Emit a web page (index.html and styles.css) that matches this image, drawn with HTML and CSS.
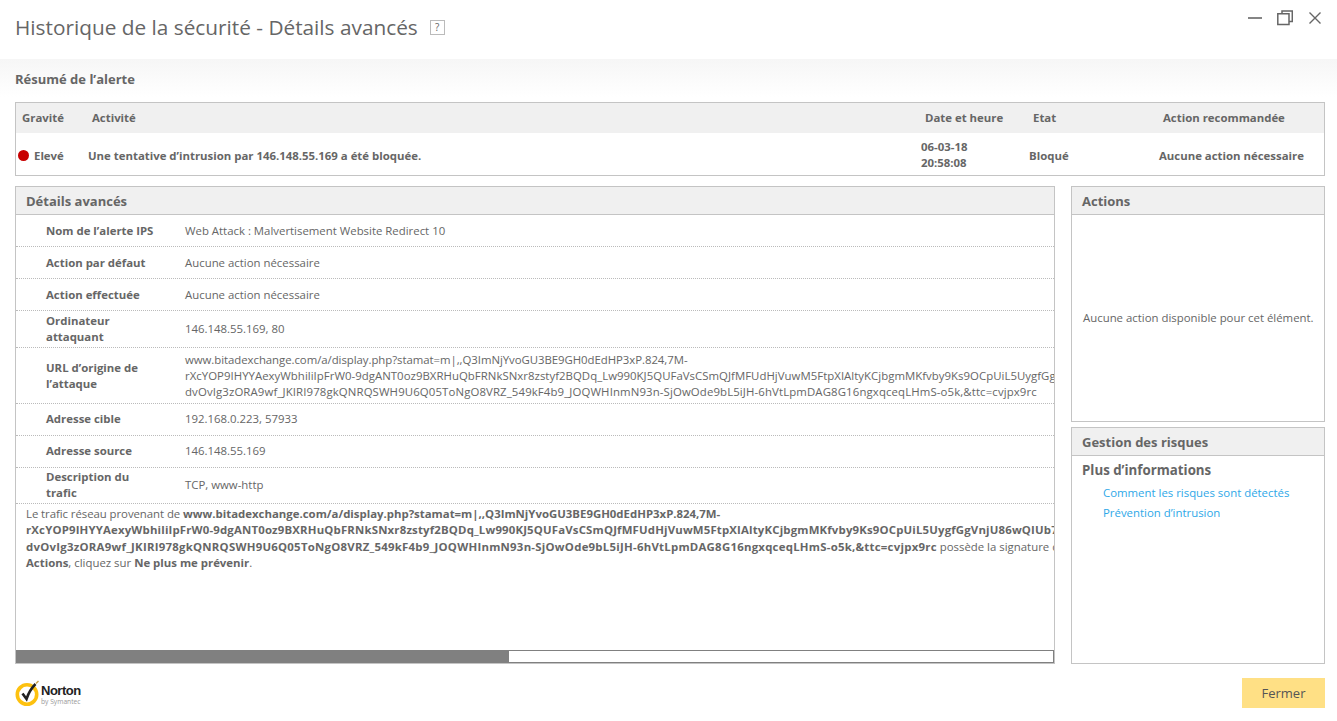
FILE: index.html
```html
<!DOCTYPE html>
<html lang="fr">
<head>
  <meta charset="UTF-8">
  <title>Historique de la sécurité - Détails avancés</title>
  <link rel="stylesheet" href="styles.css">
</head>
<body>
  <header class="title-bar">
    <h1>Historique de la sécurité - Détails avancés</h1>
    <span class="help-btn">?</span>
    <div class="window-btns">
      <svg width="16" height="16" viewBox="0 0 16 16"><path d="M2 8h14" stroke="#666" stroke-width="1.6" fill="none"/></svg>
      <svg width="16" height="16" viewBox="0 0 16 16"><path d="M.8 3.800H12V14.500H.8zM5 3.500V1H15.300V11.500H12" stroke="#666" stroke-width="1.500" fill="none"/></svg>
      <svg width="14" height="16" viewBox="0 0 14 16"><path d="M1.500 2.500l11 11M12.500 2.500l-11 11" stroke="#666" stroke-width="1.400" fill="none"/></svg>
    </div>
  </header>

  <main>
    <section class="summary">
      <h2>Résumé de l’alerte</h2>
      <div class="alert-table">
        <div class="alert-row alert-head">
          <span class="pl-6">Gravité</span>
          <span class="pl-4">Activité</span>
          <span class="pl-4">Date et heure</span>
          <span class="pl-4">Etat</span>
          <span class="pl-4">Action recommandée</span>
        </div>
        <div class="alert-row alert-body">
          <span class="severity"><i class="dot"></i>Elevé</span>
          <span>Une tentative d’intrusion par 146.148.55.169 a été bloquée.</span>
          <span class="date">06-03-18<br>20:58:08</span>
          <span>Bloqué</span>
          <span>Aucune action nécessaire</span>
        </div>
      </div>
    </section>

    <div class="columns">
      <section class="panel details">
        <h3 class="panel-head">Détails avancés</h3>
        <div class="detail-rows">
          <div class="detail-row"><b>Nom de l’alerte IPS</b><span>Web Attack : Malvertisement Website Redirect 10</span></div>
          <div class="detail-row"><b>Action par défaut</b><span>Aucune action nécessaire</span></div>
          <div class="detail-row"><b>Action effectuée</b><span>Aucune action nécessaire</span></div>
          <div class="detail-row tall"><b>Ordinateur attaquant</b><span>146.148.55.169, 80</span></div>
          <div class="detail-row url"><b>URL d’origine de l’attaque</b><span><span class="url-line1">www.bitadexchange.com/a/display.php?stamat=m|,,Q3ImNjYvoGU3BE9GH0dEdHP3xP.824,7M-</span><br><span class="url-line2">rXcYOP9IHYYAexyWbhiliIpFrW0-9dgANT0oz9BXRHuQbFRNkSNxr8zstyf2BQDq_Lw990KJ5QUFaVsCSmQJfMFUdHjVuwM5FtpXIAltyKCjbgmMKfvby9Ks9OCpUiL5UygfGgVnjU86wQIUb7Zk</span><br><span class="url-line3">dvOvIg3zORA9wf_JKIRI978gkQNRQSWH9U6Q05ToNgO8VRZ_549kF4b9_JOQWHInmN93n-SjOwOde9bL5iJH-6hVtLpmDAG8G16ngxqceqLHmS-o5k,&amp;ttc=cvjpx9rc</span></span></div>
          <div class="detail-row"><b>Adresse cible</b><span>192.168.0.223, 57933</span></div>
          <div class="detail-row"><b>Adresse source</b><span>146.148.55.169</span></div>
          <div class="detail-row tall"><b>Description du trafic</b><span>TCP, www-http</span></div>
        </div>
        <p class="detail-text"><span class="lead">Le trafic réseau provenant de</span> <b>www.bitadexchange.com/a/display.php?stamat=m|,,Q3ImNjYvoGU3BE9GH0dEdHP3xP.824,7M-<br><span class="bold-line2">rXcYOP9IHYYAexyWbhiliIpFrW0-9dgANT0oz9BXRHuQbFRNkSNxr8zstyf2BQDq_Lw990KJ5QUFaVsCSmQJfMFUdHjVuwM5FtpXIAltyKCjbgmMKfvby9Ks9OCpUiL5UygfGgVnjU86wQIUb7Zk</span><br><span class="bold-line3">dvOvIg3zORA9wf_JKIRI978gkQNRQSWH9U6Q05ToNgO8VRZ_549kF4b9_JOQWHInmN93n-SjOwOde9bL5iJH-6hVtLpmDAG8G16ngxqceqLHmS-o5k,&amp;ttc=cvjpx9rc</span></b> possède la signature d’attaque<br><b>Actions</b>, cliquez sur <b>Ne plus me prévenir</b>.</p>
        <div class="scrollbar"><div class="scroll-thumb"></div></div>
      </section>

      <aside class="side">
        <section class="panel actions">
          <h3 class="panel-head">Actions</h3>
          <p class="empty">Aucune action disponible pour cet élément.</p>
        </section>
        <section class="panel risks">
          <h3 class="panel-head">Gestion des risques</h3>
          <h4>Plus d’informations</h4>
          <a href="#">Comment les risques sont détectés</a>
          <a href="#">Prévention d’intrusion</a>
        </section>
      </aside>
    </div>
  </main>

  <footer>
    <div class="logo">
      <svg width="26" height="26" viewBox="0 0 26 26">
        <circle cx="12" cy="14.500" r="9.700" fill="#fff" stroke="#fdc10f" stroke-width="3.600"/>
        <path d="M7.500 13.500l4 5.500c2-6 5-11 9-15" stroke="#222" stroke-width="2.600" fill="none"/>
        <path d="M21 3.500l2.500-2.500" stroke="#c9a24a" stroke-width="1.500"/>
      </svg>
      <div class="logo-text"><strong>Norton</strong><small>by Symantec</small></div>
    </div>
    <button class="close-btn">Fermer</button>
  </footer>
</body>
</html>
```

FILE: styles.css
```css
* {
  box-sizing: border-box;
}

html, body {
  height: 100%;
}

body {
  margin: 0;
  background: #fff;
  color: #666;
  font-family: "Open Sans", "Noto Sans", sans-serif;
  font-size: 11.4px;
  line-height: 16px;
  overflow: hidden;
}

.title-bar {
  display: flex;
  align-items: center;
  height: 59px;
  padding: 0 15px 5px;
}

h1 {
  margin: 0;
  font-size: 20.800px;
  font-weight: 400;
  color: #666;
}

.help-btn {
  width: 15px;
  height: 15px;
  margin-left: 12px;
  border: 1px solid #bbb;
  font-size: 10px;
  line-height: 13px;
  text-align: center;
}

.window-btns {
  display: flex;
  align-self: flex-start;
  gap: 15px;
  margin-left: auto;
  padding-top: 10px;
}

main {
  padding: 0 12px 0 15px;
}

.summary {
  margin: 0 -12px 0 -15px;
  padding: 0 12px 0 15px;
  background: linear-gradient(#f6f6f6, #fff 38px);
}

h2 {
  margin: 0;
  padding-top: 12px;
  height: 43px;
  font-size: 13px;
  font-weight: 700;
}

.alert-table {
  border: 1px solid #c4c4c4;
  font-weight: 700;
}

.alert-row {
  display: grid;
  grid-template-columns: 72px 833px 108px 130px 1fr;
  align-items: center;
}

.alert-head {
  height: 30px;
  background: #f0f0f0;
}

.alert-body {
  height: 42px;
  padding-top: 4px;
}

.pl-6 {
  padding-left: 6px;
}

.pl-4 {
  padding-left: 4px;
}

.severity {
  display: flex;
  align-items: center;
}

.dot {
  width: 11px;
  height: 11px;
  margin: -2px 5px 0 2px;
  border-radius: 50%;
  background: #c80000;
}

.date {
  margin-top: -2px;
}

.columns {
  display: grid;
  grid-template-columns: 1040px 254px;
  gap: 16px;
  margin-top: 10px;
  height: 478px;
}

.panel {
  border: 1px solid #c4c4c4;
}

.panel-head {
  margin: 0;
  height: 28px;
  padding-left: 10px;
  background: #f0f0f0;
  border-bottom: 1px solid #c4c4c4;
  font-size: 13px;
  font-weight: 700;
  line-height: 29px;
}

.details {
  position: relative;
  overflow: hidden;
  white-space: nowrap;
}

.detail-row {
  display: grid;
  grid-template-columns: 139px 1fr;
  align-items: center;
  height: 32px;
  padding-left: 30px;
  border-bottom: 1px dotted #bbb;
}

.detail-row b {
  font-weight: 700;
  white-space: normal;
  width: 110px;
}

.detail-row.tall {
  height: 36.500px;
}

.detail-row.url {
  height: 56px;
  padding-top: 1px;
}

.url-line1 {
  letter-spacing: -0.05px;
}

.url-line2 {
  letter-spacing: 0.03px;
}

.url-line3 {
  letter-spacing: 0.12px;
}

.bold-line2 {
  letter-spacing: 0.17px;
}

.bold-line3 {
  letter-spacing: 0.25px;
}

.lead {
  letter-spacing: -0.06px;
}

.detail-text {
  margin: 0;
  padding: 2px 0 0 10px;
  line-height: 16.300px;
}

.detail-text b {
  font-weight: 700;
}

.scrollbar {
  position: absolute;
  left: 0;
  right: 0;
  bottom: 0;
  height: 13px;
  background: #fff;
  border: 1px solid #808080;
}

.scroll-thumb {
  width: 491px;
  height: 100%;
  margin: -1px 0 0 -1px;
  box-sizing: content-box;
  border: 1px solid #808080;
  background: #808080;
}

.side {
  display: flex;
  flex-direction: column;
  gap: 5px;
}

.actions {
  display: flex;
  flex-direction: column;
  height: 236px;
}

.empty {
  margin: auto 0;
  padding: 0 4px 0 11px;
  white-space: nowrap;
}

.risks {
  flex: 1;
}

h4 {
  margin: 6px 0 7px 10px;
  font-size: 13.300px;
  font-weight: 700;
}

.risks a {
  display: block;
  margin: 0 0 4px 31px;
  color: #2ea8e8;
  text-decoration: none;
}

footer {
  display: flex;
  justify-content: space-between;
  padding: 14px 12px 0 15px;
}

.logo {
  display: flex;
  align-items: flex-start;
  margin-top: 2px;
}

.logo-text {
  display: flex;
  flex-direction: column;
}

.logo-text strong {
  font-family: "Liberation Sans", sans-serif;
  font-size: 13px;
  line-height: 14px;
  letter-spacing: -0.500px;
  color: #222;
  margin-top: 4px;
}

.logo-text small {
  font-size: 6.700px;
  line-height: 8px;
  color: #999;
}

.close-btn {
  width: 83px;
  height: 30px;
  border: 0;
  background: #ffe085;
  color: #555;
  font: inherit;
  font-size: 13px;
}
```
